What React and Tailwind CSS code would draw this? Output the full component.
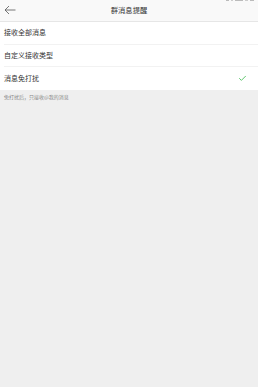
import { Check } from "lucide-react"

const rows = [
  { label: "接收全部消息", checked: false },
  { label: "自定义接收类型", checked: false },
  { label: "消息免打扰", checked: true },
]

export default function App() {
  return (
    <div
      className="w-[258px] h-[387px] bg-[#efefef] flex flex-col text-[#333333]"
      style={{ fontFamily: '"Noto Sans CJK SC", "Noto Sans", sans-serif' }}
    >
      {/* header */}
      <div className="relative h-[22px] bg-[#f9f9f9] border-b border-[#e6e6e6] flex items-center justify-center shrink-0">
        {/* bottom edge of the status bar, cut off */}
        <div className="absolute top-0 right-[4px] flex gap-[2px]">
          <div className="w-[3px] h-[1px] bg-[#bbbbbb]" />
          <div className="w-[2px] h-[1px] bg-[#cccccc]" />
          <div className="w-[8px] h-[1px] bg-[#bbbbbb]" />
          <div className="w-[3px] h-[1px] bg-[#cccccc]" />
          <div className="w-[4px] h-[1px] bg-[#bbbbbb]" />
        </div>
        <button className="absolute left-[4px] top-[5px] text-[#555555]">
          <svg width="12" height="10" viewBox="0 0 12 10" fill="none">
            <path d="M11.5 5H1M5 1L1 5L5 9" stroke="currentColor" strokeWidth="0.8" />
          </svg>
        </button>
        <span className="text-[7.3px] leading-none">群消息提醒</span>
      </div>

      {/* options */}
      <div className="bg-white">
        {rows.map((row, i) => (
          <div key={row.label} className="pl-[4px]">
            <div
              className={
                "h-[22.7px] flex items-center justify-between pr-[11px] " +
                (i < rows.length - 1 ? "border-b border-[#f2f2f2]" : "")
              }
            >
              <span className="text-[7px] leading-none">{row.label}</span>
              {row.checked && <Check className="w-[9px] h-[9px] text-[#3dbb4f]" strokeWidth={2.2} />}
            </div>
          </div>
        ))}
      </div>

      <div className="px-[4px] pt-[4px] text-[5px] leading-[6px] text-[#888888]">
        免打扰后，只接收@我的消息
      </div>
    </div>
  )
}
